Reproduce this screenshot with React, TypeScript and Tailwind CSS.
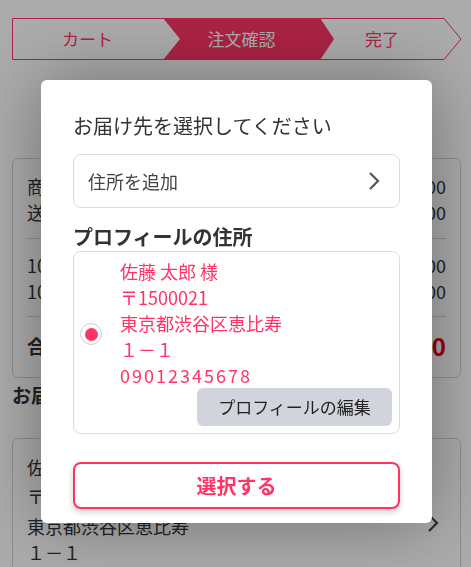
import React from "react";

const font = { fontFamily: '"Noto Sans CJK JP", "Noto Sans", sans-serif' };

function Stepper() {
  return (
    <div className="relative h-[42px] w-[450px]">
      <svg className="absolute inset-0" width="450" height="42" viewBox="0 0 450 42">
        <polygon
          points="0.5,0.5 432,0.5 449,21 432,41.5 0.5,41.5"
          fill="#ffffff"
          stroke="#ff3366"
          strokeWidth="1"
        />
        <polygon points="151,0 308,0 322,21 308,42 151,42 168,21" fill="#ff3366" />
      </svg>
      <div className="relative flex h-full items-center text-[17px]">
        <span className="w-[151px] text-center text-[#ff3366]">カート</span>
        <span className="w-[157px] text-center text-white">注文確認</span>
        <span className="w-[124px] text-center text-[#ff3366]">完了</span>
      </div>
    </div>
  );
}

function Row({ label, value }: { label: string; value: string }) {
  return (
    <div className="flex h-[26px] items-center justify-between">
      <span>{label}</span>
      <span>{value}</span>
    </div>
  );
}

function Page() {
  return (
    <div className="min-h-[567px] bg-white px-3 pt-[18px] text-[18px] text-[#333]">
      <Stepper />
      <div className="mt-[98px] w-[449px] rounded-md border border-[#d4d4d4] px-[14px] pt-[14px] pb-[14px] leading-[26px]">
        <Row label="商品小計" value="¥1,000" />
        <Row label="送料" value="¥500" />
        <div className="my-[13px] border-t border-[#d4d4d4]" />
        <Row label="10%対象" value="¥1,500" />
        <Row label="10%消費税" value="¥100" />
        <div className="mt-[12px] border-t border-[#d4d4d4]" />
        <div className="mt-[12px] flex h-[34px] items-center justify-between font-bold">
          <span className="text-[19px]">合計</span>
          <span className="text-[24px] text-[#e60012]">¥1,600</span>
        </div>
      </div>
      <h2 className="mt-[4px] text-[19px] leading-[26px] font-bold">お届け先</h2>
      <div className="mt-[30px] flex w-[449px] items-center rounded-md border border-[#d4d4d4] px-[14px] pt-[15px] pb-[14px]">
        <div className="flex-1 leading-[26px]">
          <p>佐藤 太郎 様</p>
          <p className="mt-[3px]">〒1500021</p>
          <p className="mt-[4px]">東京都渋谷区恵比寿</p>
          <p>１－１</p>
          <p>09012345678</p>
        </div>
        <svg width="14" height="20" viewBox="0 0 14 20" className="mr-[6px]">
          <path d="M3 2 L11 10 L3 18" fill="none" stroke="#444" strokeWidth="2.2" />
        </svg>
      </div>
    </div>
  );
}

function Modal() {
  return (
    <div className="fixed inset-0 bg-black/[0.33]">
      <div className="absolute top-[80px] left-[41px] w-[391px] rounded-md bg-white px-[32px] pt-[34px] pb-[14px] shadow-[0_0_70px_rgba(0,0,0,0.35)]">
        <h1 className="text-[20px] leading-[24px] text-[#333]">お届け先を選択してください</h1>
        <button className="mt-4 flex h-[54px] w-full items-center justify-between rounded-lg border border-[#dcdcdc] pr-[18px] pl-[14px] text-[18px] text-[#444]">
          <span>住所を追加</span>
          <svg width="14" height="20" viewBox="0 0 14 20">
            <path d="M3 2 L11 10 L3 18" fill="none" stroke="#555" strokeWidth="2.2" />
          </svg>
        </button>
        <h2 className="mt-4 text-[20px] leading-[26px] font-bold text-[#333]">プロフィールの住所</h2>
        <div className="mt-px flex flex-col rounded-lg border border-[#dcdcdc] pt-[6px] pr-[7px] pb-[7px]">
          <div className="flex items-start">
            <div className="mt-[65px] ml-[6px] flex h-[22px] w-[22px] items-center justify-center rounded-full border border-[#cfcfcf] bg-white">
              <div className="h-[13px] w-[13px] rounded-full bg-[#ff3366]" />
            </div>
            <div className="ml-[18px] text-[18px] leading-[26px] text-[#ff3366]">
              <p>佐藤 太郎 様</p>
              <p>〒1500021</p>
              <p>東京都渋谷区恵比寿</p>
              <p>１－１</p>
              <p className="tracking-[2px]">09012345678</p>
            </div>
          </div>
          <button className="h-[38px] w-[195px] self-end rounded-md bg-[#d1d5db] text-[17px] text-[#222]">
            プロフィールの編集
          </button>
        </div>
        <button className="mt-[28px] h-[47px] w-full rounded-lg border-2 border-[#ff3366] bg-white text-[20px] font-bold text-[#ff3366] shadow-[0_3px_6px_rgba(0,0,0,0.2)]">
          選択する
        </button>
      </div>
    </div>
  );
}

export default function App() {
  return (
    <div style={font} className="relative h-[567px] w-[471px] overflow-hidden">
      <Page />
      <Modal />
    </div>
  );
}
